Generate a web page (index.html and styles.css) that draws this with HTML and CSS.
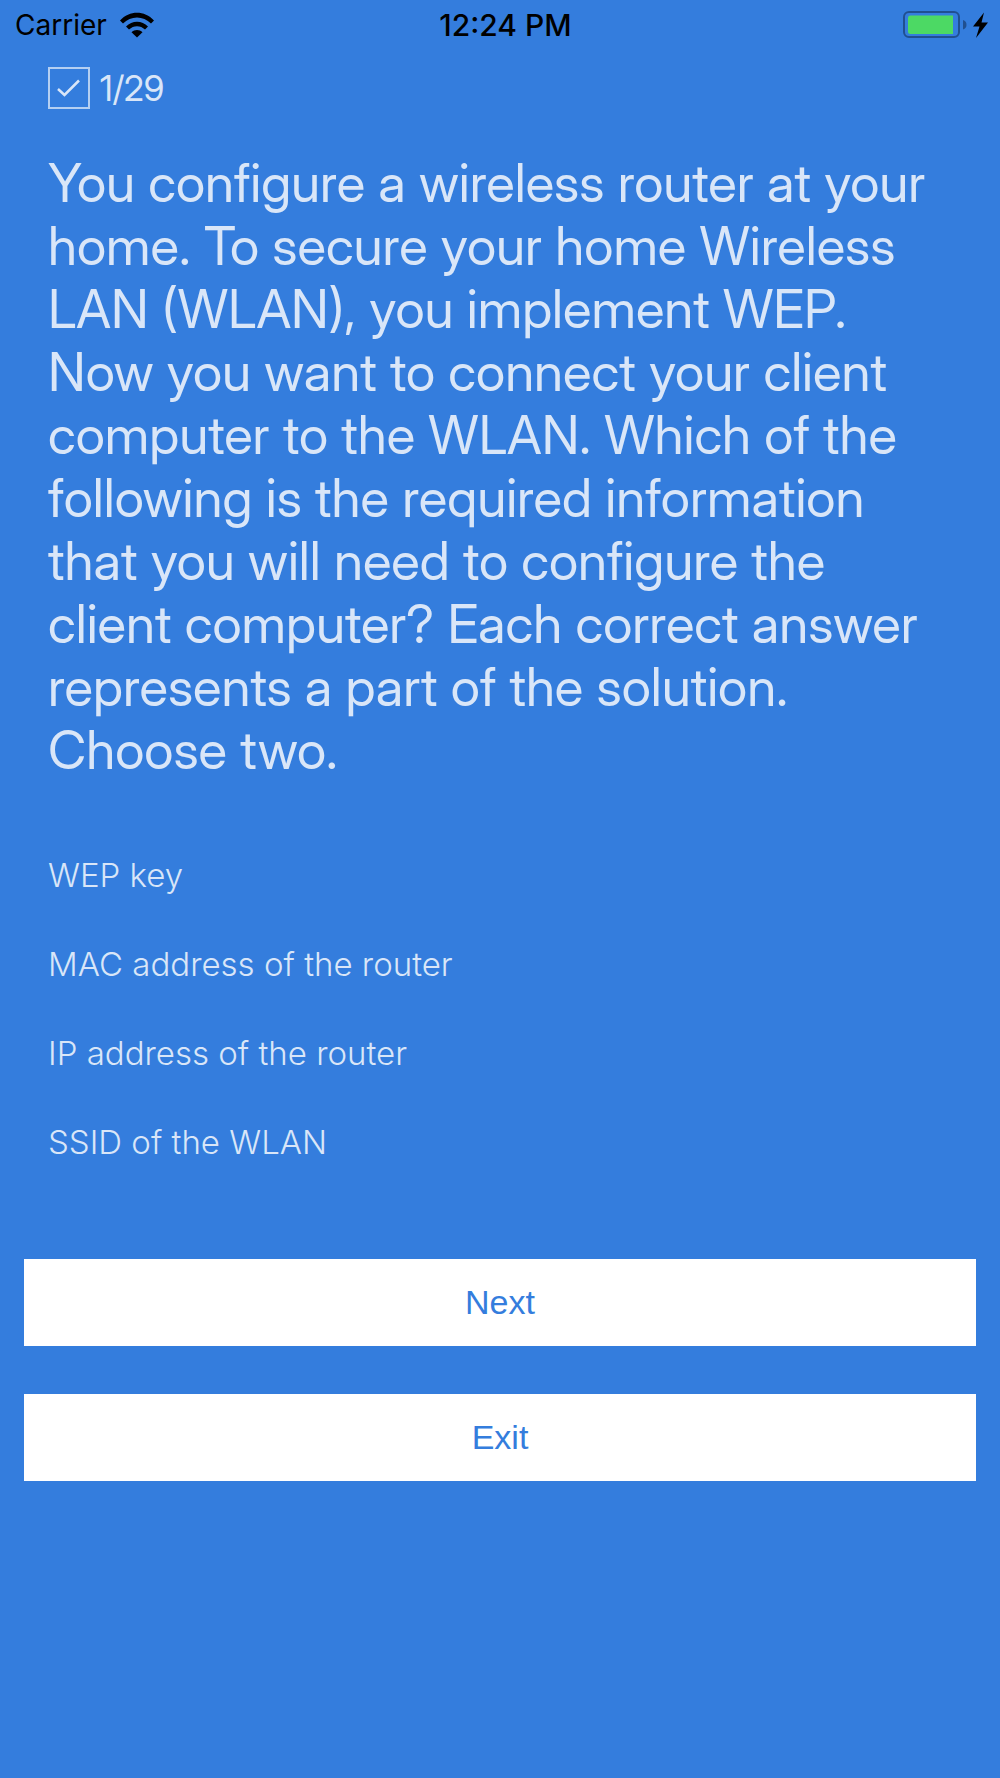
FILE: index.html
```html
<!DOCTYPE html>
<html lang="en">

<head>
    <meta charset="UTF-8">
    <meta name="viewport" content="width=device-width, initial-scale=1.0">
    <title>Quiz</title>
    <link rel="stylesheet" href="styles.css">
</head>

<body>
    <header class="status-bar">
        <div class="status-left">
            <span>Carrier</span>
            <svg class="wifi" width="36" height="26" viewBox="0 0 36 26" aria-hidden="true">
                <path d="M1 8.5C10.5-1.8 25.5-1.8 35 8.5L32 11.5C24.2 3.5 11.8 3.5 4 11.5Z" />
                <path d="M7 14.5C13 8.2 23 8.2 29 14.5L26 17.5C21.5 13 14.5 13 10 17.5Z" />
                <path d="M12.5 20.2C15.5 17.2 20.5 17.2 23.5 20.2L18 25.5Z" />
            </svg>
        </div>
        <time class="status-time">12:24 PM</time>
        <div class="status-right">
            <svg width="85" height="28" viewBox="0 0 85 28" aria-hidden="true">
                <rect class="battery-case" x="1" y="1" width="55" height="25" rx="5" />
                <path class="battery-cap" d="M60 9Q63.5 10 63.5 13.7T60 18.5Z" />
                <path class="battery-level" d="M50 4.5V23H7.5Q5 23 5 20.5V7Q5 4.5 7.5 4.5Z" />
                <path d="M81 1.5L70 15.5H76.5L73 27L85 11.5H78.5Z" />
            </svg>
        </div>
    </header>

    <main class="quiz">
        <div class="progress">
            <input type="checkbox" id="questionCheck" checked>
            <label for="questionCheck">1/29</label>
        </div>

        <p class="question">You configure a wireless router at your home. To secure your home Wireless LAN (WLAN), you implement WEP. Now you want to connect your client computer to the WLAN. Which of the following is the required information that you will need to configure the client computer? Each correct answer represents a part of the solution. Choose two.</p>

        <div class="answers">
            <button type="button" class="answer">WEP key</button>
            <button type="button" class="answer">MAC address of the router</button>
            <button type="button" class="answer">IP address of the router</button>
            <button type="button" class="answer">SSID of the WLAN</button>
        </div>
    </main>

    <footer class="actions">
        <button type="button" class="action">Next</button>
        <button type="button" class="action">Exit</button>
    </footer>
</body>

</html>
```
FILE: styles.css
```css
body {
    margin: 0;
    background-color: #347ddd;
    font-family: Inter, sans-serif;
}

button {
    border: none;
    cursor: pointer;
}

.status-bar {
    display: grid;
    grid-template-columns: 1fr auto 1fr;
    align-items: center;
    height: 50px;
    padding: 0 12px 0 15px;
    font-size: 28px;
    color: #000;
}

.status-left {
    display: flex;
    align-items: center;
    gap: 12px;
}

.status-time {
    padding-left: 8px;
    font-size: 30px;
    font-weight: 500;
}

.status-right {
    display: flex;
    justify-content: flex-end;
}

.battery-case {
    fill: none;
    stroke: #205090;
    stroke-width: 2;
}

.battery-cap {
    fill: #205090;
}

.battery-level {
    fill: #4cd964;
}

.quiz {
    padding: 17px 48px 0;
    color: #d9e6f8;
}

.progress {
    display: flex;
    align-items: center;
    gap: 10px;
    height: 42px;
    font-family: "Inter Display", Inter, sans-serif;
    font-size: 35px;
    line-height: 40px;
}

.progress input {
    appearance: none;
    width: 42px;
    height: 42px;
    margin: 0;
    border: 2px solid #b4cff2;
}

.progress input:checked {
    background: url("data:image/svg+xml,%3Csvg xmlns='http://www.w3.org/2000/svg' viewBox='0 0 38 38'%3E%3Cpath d='M8 20L14.5 26L29 11.5' fill='none' stroke='%23d9e6f8' stroke-width='2.5'/%3E%3C/svg%3E") center / 100%;
}

.question {
    margin: 43px 0 0;
    font-family: "Inter Display", Inter, sans-serif;
    font-size: 53px;
    line-height: 63px;
}

.answers {
    display: flex;
    flex-direction: column;
    margin-top: 48px;
}

.answer {
    height: 89px;
    padding: 0;
    background: none;
    color: inherit;
    font-family: Inter, sans-serif;
    font-size: 33px;
    font-weight: 300;
    text-align: left;
}

.actions {
    display: flex;
    flex-direction: column;
    gap: 48px;
    padding: 73px 24px;
}

.action {
    height: 87px;
    background-color: #fff;
    color: #347ddd;
    font-family: "Liberation Sans", sans-serif;
    font-size: 34px;
}
```
